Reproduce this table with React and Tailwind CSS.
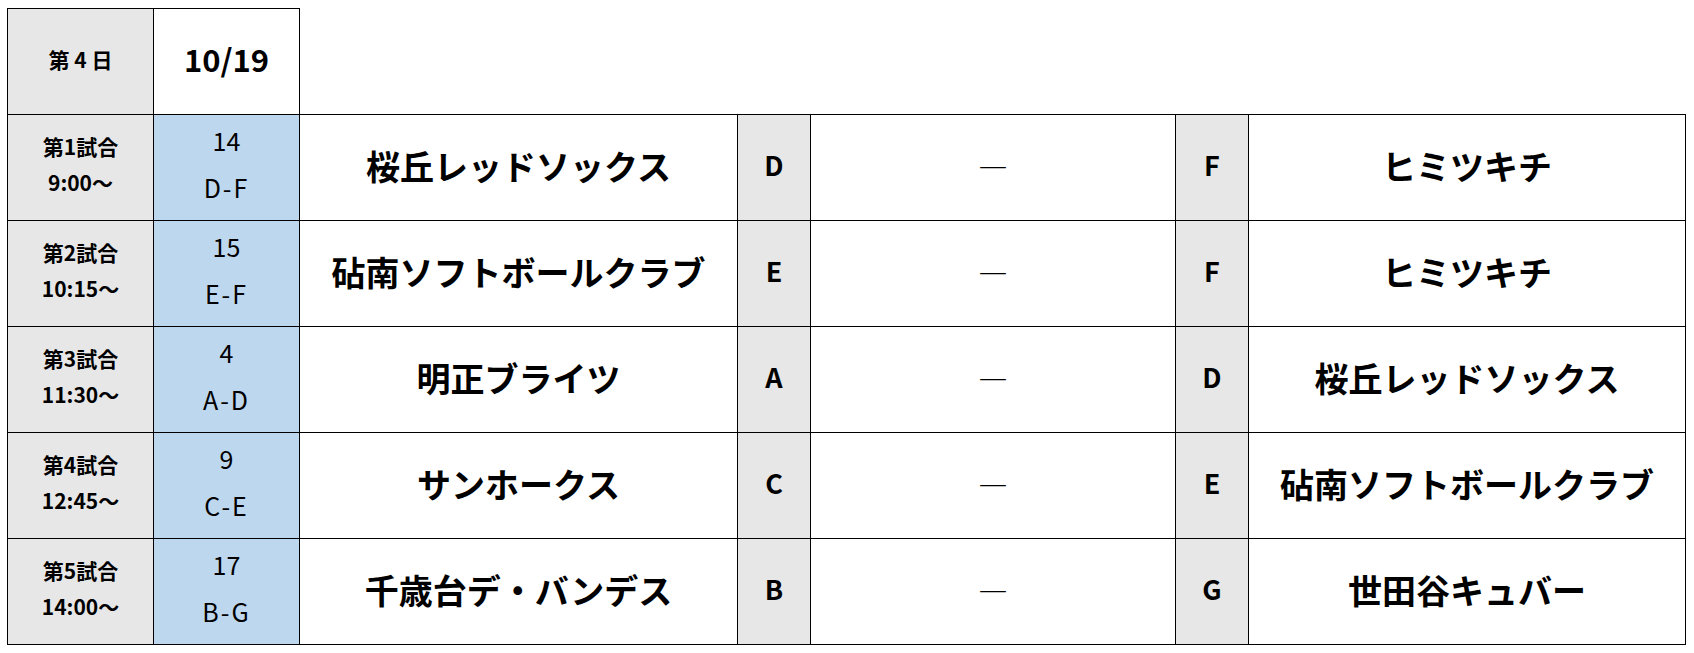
const matches = [
  { no: 1, time: '9:00～', num: 14, pair: 'D-F', home: '桜丘レッドソックス', homeGroup: 'D', away: 'ヒミツキチ', awayGroup: 'F' },
  { no: 2, time: '10:15～', num: 15, pair: 'E-F', home: '砧南ソフトボールクラブ', homeGroup: 'E', away: 'ヒミツキチ', awayGroup: 'F' },
  { no: 3, time: '11:30～', num: 4, pair: 'A-D', home: '明正ブライツ', homeGroup: 'A', away: '桜丘レッドソックス', awayGroup: 'D' },
  { no: 4, time: '12:45～', num: 9, pair: 'C-E', home: 'サンホークス', homeGroup: 'C', away: '砧南ソフトボールクラブ', awayGroup: 'E' },
  { no: 5, time: '14:00～', num: 17, pair: 'B-G', home: '千歳台デ・バンデス', homeGroup: 'B', away: '世田谷キュバー', awayGroup: 'G' },
]

function MatchRow({ match }) {
  return (
    <>
      {/* 試合番号と開始時刻 */}
      <div className="flex flex-col items-center justify-center bg-[#e7e7e7] pb-[8px] text-[21px] font-bold leading-[36px]">
        <span>第{match.no}試合</span>
        <span>{match.time}</span>
      </div>
      <div className="flex flex-col items-center justify-center bg-[#bdd7ee] pb-[8px] text-[25px] leading-[47px]">
        <span>{match.num}</span>
        <span className="tracking-[2px]">{match.pair}</span>
      </div>
      <div className="flex items-center justify-center bg-white pb-[4px] text-[34px] font-bold">
        {match.home}
      </div>
      <div className="flex items-center justify-center bg-[#e7e7e7] pb-[4px] text-[27px] font-bold">
        {match.homeGroup}
      </div>
      <div className="flex items-center justify-center bg-white pb-[2px] text-[30px]">
        ―
      </div>
      <div className="flex items-center justify-center bg-[#e7e7e7] pb-[4px] text-[27px] font-bold">
        {match.awayGroup}
      </div>
      <div className="flex items-center justify-center bg-white pb-[4px] text-[34px] font-bold">
        {match.away}
      </div>
    </>
  )
}

export default function App() {
  return (
    <div className="min-h-screen bg-white pl-[7px] pt-[8px] text-black font-['Noto_Sans_CJK_JP',sans-serif]">
      {/* 日付ヘッダー */}
      <div className="grid w-max grid-cols-[145px_145px] gap-px bg-black px-px pt-px">
        <div className="flex h-[105px] items-center justify-center bg-[#e7e7e7] pb-[4px] text-[21px] font-bold">
          第 4 日
        </div>
        <div className="flex h-[105px] items-center justify-center bg-white pb-[4px] text-[31px] font-bold">
          10/19
        </div>
      </div>

      {/* 試合一覧 */}
      <div className="grid w-max grid-cols-[145px_145px_437px_72px_364px_72px_436px] auto-rows-[105px] gap-px bg-black p-px">
        {matches.map((m) => (
          <MatchRow key={m.no} match={m} />
        ))}
      </div>
    </div>
  )
}
